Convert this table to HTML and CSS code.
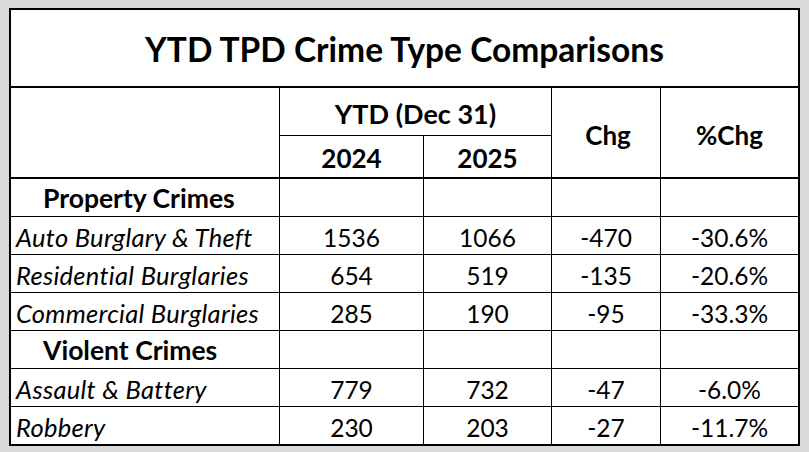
FILE: index.html
```html
<!DOCTYPE html>
<html>
<head>
<meta charset="utf-8">
<link rel="stylesheet" href="styles.css">
</head>
<body>
<div class="sheet">
  <div class="title">YTD TPD Crime Type Comparisons</div>
  <div class="grid head">
    <div class="cell c1 span2"></div>
    <div class="cell ytd">YTD (Dec 31)</div>
    <div class="cell hdr span2 c4">Chg</div>
    <div class="cell hdr span2 c5">%Chg</div>
    <div class="cell year c2">2024</div>
    <div class="cell year c3">2025</div>
  </div>
  <div class="grid body">
    <div class="cell sec">Property Crimes</div><div class="cell"></div><div class="cell"></div><div class="cell"></div><div class="cell"></div>
    <div class="cell lbl">Auto Burglary &amp; Theft</div><div class="cell num">1536</div><div class="cell num">1066</div><div class="cell num">-470</div><div class="cell num">-30.6%</div>
    <div class="cell lbl">Residential Burglaries</div><div class="cell num">654</div><div class="cell num">519</div><div class="cell num">-135</div><div class="cell num">-20.6%</div>
    <div class="cell lbl">Commercial Burglaries</div><div class="cell num">285</div><div class="cell num">190</div><div class="cell num">-95</div><div class="cell num">-33.3%</div>
    <div class="cell sec">Violent Crimes</div><div class="cell"></div><div class="cell"></div><div class="cell"></div><div class="cell"></div>
    <div class="cell lbl">Assault &amp; Battery</div><div class="cell num">779</div><div class="cell num">732</div><div class="cell num">-47</div><div class="cell num">-6.0%</div>
    <div class="cell lbl last">Robbery</div><div class="cell num last">230</div><div class="cell num last">203</div><div class="cell num last">-27</div><div class="cell num last">-11.7%</div>
  </div>
</div>
</body>
</html>
```
FILE: styles.css
```css
html, body {
  margin: 0;
  padding: 0;
  background: #d9d9d9;
}
body {
  padding: 8px 0 0 9px;
  font-family: "Lato", "Noto Sans", sans-serif;
  color: #000;
}
.sheet {
  width: 791px;
  height: 438px;
  box-sizing: border-box;
  border: 2px solid #000;
  background: #fff;
  display: flex;
  flex-direction: column;
}
.title {
  height: 78px;
  box-sizing: border-box;
  border-bottom: 2px solid #000;
  display: flex;
  align-items: center;
  justify-content: center;
  font-weight: 700;
  font-size: 33.5px;
  padding-top: 2px;
}
.grid {
  display: grid;
  grid-template-columns: 269px 144px 128px 109px 137px;
}
.cell {
  box-sizing: border-box;
  border-right: 1px solid #000;
  display: flex;
  align-items: center;
}
.cell:nth-child(5n) { border-right: none; }
.head {
  grid-template-rows: 48px 41px;
  height: 91px;
  box-sizing: border-box;
  border-bottom: 2px solid #000;
}
.head .cell { border-right: 1px solid #000; }
.head .c5 { border-right: none; }
.span2 { grid-row: span 2; }
.ytd {
  grid-column: span 2;
  border-bottom: 1px solid #000;
  justify-content: center;
  font-weight: 700;
  font-size: 27px;
  padding-top: 3px;
}
.hdr {
  justify-content: center;
  font-weight: 700;
  font-size: 26px;
  padding-top: 5px;
}
.c4 { padding-left: 4px; }
.year {
  justify-content: center;
  font-weight: 700;
  font-size: 26px;
  padding-top: 2px;
}
.body {
  grid-template-rows: repeat(7, 38px);
  height: 265px;
}
.body .cell {
  border-bottom: 1px solid #000;
  padding-top: 3px;
}
.body .cell.last { border-bottom: none; height: 37px; }
.sec {
  font-weight: 700;
  font-size: 26.5px;
  padding-left: 32px;
  padding-top: 0 !important;
}
.lbl {
  font-style: italic;
  font-size: 25.5px;
  letter-spacing: 0.3px;
  padding-left: 5px;
}
.num {
  justify-content: center;
  font-size: 24.5px;
}
```
